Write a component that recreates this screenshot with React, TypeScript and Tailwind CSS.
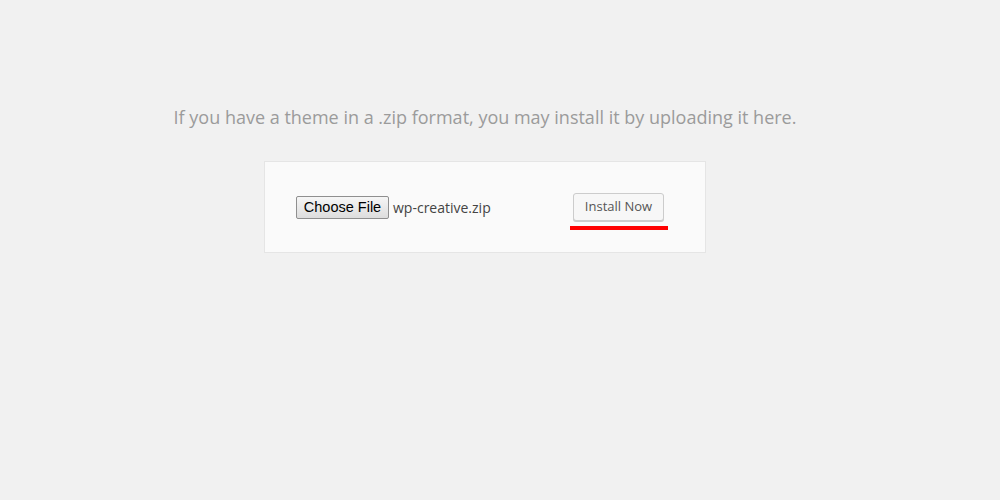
export default function App() {
  return (
    <div className="min-h-[500px] w-full bg-[#f1f1f1] font-['Open_Sans',sans-serif]">
      <div className="w-[970px] flex flex-col items-center pt-[104px]">
        <p className="text-[18px] leading-[26px] text-[#9b9b9b]">
          If you have a theme in a .zip format, you may install it by uploading it here.
        </p>
        <form
          className="mt-[31px] flex h-[92px] w-[442px] items-center justify-between border border-[#e5e5e5] bg-[#fafafa] pl-[31px] pr-[41px]"
          onSubmit={(e) => e.preventDefault()}
        >
          <div className="flex items-center">
            <button
              type="button"
              className="h-[23px] w-[93px] rounded-[2px] border border-[#8f8f8f] bg-gradient-to-b from-[#f6f6f6] to-[#dddddd] font-['Liberation_Sans',Arial,sans-serif] text-[14.5px] leading-none text-black"
            >
              Choose File
            </button>
            <span className="ml-[4px] text-[14px] text-[#444]">wp-creative.zip</span>
          </div>
          <div className="relative">
            <button
              type="submit"
              className="h-[28px] w-[91px] rounded-[3px] border border-[#cccccc] bg-[#f7f7f7] text-[13px] text-[#555] shadow-[0_1px_0_#cccccc]"
            >
              Install Now
            </button>
            <div className="absolute left-[-3px] top-[33px] h-[4px] w-[98px] bg-[#ff0000]" />
          </div>
        </form>
      </div>
    </div>
  );
}
